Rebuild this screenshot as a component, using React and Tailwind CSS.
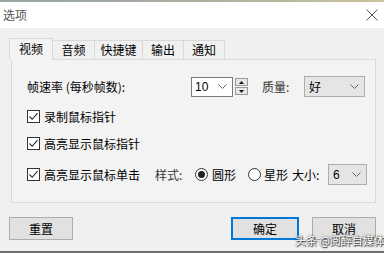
import React from "react";

const cjk = "font-['Noto_Sans_CJK_SC',sans-serif]";

function Chevron() {
  return (
    <svg width="9" height="5" viewBox="0 0 9 5" className="block">
      <path d="M0.5 0.5 L4.5 4.5 L8.5 0.5" fill="none" stroke="#6a6a6a" strokeWidth="1" />
    </svg>
  );
}

function CheckBox() {
  return (
    <div className="w-[13px] h-[13px] border border-[#333] bg-white flex items-center justify-center shrink-0">
      <svg width="11" height="11" viewBox="0 0 11 11">
        <path d="M1.5 5.5 L4.2 8.3 L9.5 2.2" fill="none" stroke="#222" strokeWidth="1.1" />
      </svg>
    </div>
  );
}

function Radio({ checked }) {
  return (
    <div className="w-[13px] h-[13px] rounded-full border border-[#333] bg-white flex items-center justify-center shrink-0">
      {checked && <div className="w-[7px] h-[7px] rounded-full bg-[#222]" />}
    </div>
  );
}

function Tab({ label, selected, w }) {
  if (selected) {
    return (
      <div
        className={`h-[22px] ${w} border border-b-0 border-[#d9d9d9] bg-[#f3f3f3] flex items-center justify-center text-[12px] text-black relative z-10 -mb-px`}
      >
        <span className="pb-[2px]">{label}</span>
      </div>
    );
  }
  return (
    <div
      className={`h-[19px] ${w} border border-b-0 border-l-0 border-[#d9d9d9] bg-[#f0f0f0] flex items-center justify-center text-[12px] text-black`}
    >
      {label}
    </div>
  );
}

export default function App() {
  return (
    <div className={`w-[384px] h-[253px] bg-[#f0f0f0] flex flex-col relative overflow-hidden ${cjk} leading-none`}>
      <div className="h-[2px] bg-gradient-to-r from-[#97a3a6] via-[#a9aea0] to-[#c9c49a]" />
      <div className="h-[26px] bg-white flex items-center justify-between pl-[3px] pr-[5px]">
        <span className="text-[12px] text-[#555]">选项</span>
        <svg width="12" height="12" viewBox="0 0 12 12" className="mr-[1px]">
          <path d="M0.5 0.5 L11.5 11.5 M11.5 0.5 L0.5 11.5" stroke="#555" strokeWidth="1" />
        </svg>
      </div>
      <div className="flex-1 flex flex-col px-[9px]">
        <div className="flex items-end mt-[10px]">
          <Tab label="视频" selected w="w-[44px]" />
          <Tab label="音频" w="w-[42px]" />
          <Tab label="快捷键" w="w-[48px]" />
          <Tab label="输出" w="w-[41px]" />
          <Tab label="通知" w="w-[41px]" />
        </div>
        <div className="ml-[2px] w-[365px] h-[144px] border border-[#d9d9d9] bg-[#f3f3f3] flex flex-col pl-[15px] pt-[16px] text-[12px] text-black">
          <div className="flex items-center h-[21px]">
            <span className="w-[164px]">帧速率 (每秒帧数):</span>
            <div className="w-[42px] h-[20px] border border-[#7a7a7a] bg-white flex items-center justify-between pl-[3px] pr-[5px]">
              <span className="font-['Liberation_Sans',sans-serif] text-[12px]">10</span>
              <Chevron />
            </div>
            <div className="ml-[2px] flex flex-col gap-[1px]">
              <div className="w-[13px] h-[8px] border border-[#9a9a9a] bg-[#e6e6e6] flex items-center justify-center">
                <svg width="5" height="3" viewBox="0 0 5 3"><path d="M0 3 L2.5 0 L5 3 Z" fill="#111" /></svg>
              </div>
              <div className="w-[13px] h-[8px] border border-[#9a9a9a] bg-[#e6e6e6] flex items-center justify-center">
                <svg width="5" height="3" viewBox="0 0 5 3"><path d="M0 0 L2.5 3 L5 0 Z" fill="#111" /></svg>
              </div>
            </div>
            <span className="ml-[14px] w-[42px] text-[#333]">质量:</span>
            <div className="w-[61px] h-[21px] border border-[#adadad] bg-[#e5e5e5] flex items-center justify-between pl-[4px] pr-[5px]">
              <span>好</span>
              <Chevron />
            </div>
          </div>
          <div className="flex items-center h-[13px] mt-[13px]">
            <CheckBox />
            <span className="ml-[4px]">录制鼠标指针</span>
          </div>
          <div className="flex items-center h-[13px] mt-[14px]">
            <CheckBox />
            <span className="ml-[4px]">高亮显示鼠标指针</span>
          </div>
          <div className="flex items-center h-[21px] mt-[14px]">
            <CheckBox />
            <span className="ml-[4px] w-[111px]">高亮显示鼠标单击</span>
            <span className="w-[40px] text-[#333]">样式:</span>
            <Radio checked />
            <span className="ml-[4px] w-[36px]">圆形</span>
            <Radio />
            <span className="ml-[3px] w-[28px]">星形</span>
            <span className="w-[36px]">大小:</span>
            <div className="w-[39px] h-[21px] border border-[#adadad] bg-[#e5e5e5] flex items-center justify-between pl-[4px] pr-[5px]">
              <span className="font-['Liberation_Sans',sans-serif]">6</span>
              <Chevron />
            </div>
          </div>
        </div>
        <div className="flex items-center mt-[14px] text-[12px] text-black">
          <div className="w-[64px] h-[23px] border border-[#adadad] bg-[#e1e1e1] flex items-center justify-center">重置</div>
          <div className="ml-auto w-[68px] h-[23px] border-2 border-[#0078d7] bg-[#e1e1e1] flex items-center justify-center">确定</div>
          <div className="ml-[13px] mr-[-1px] w-[64px] h-[23px] border border-[#adadad] bg-[#e1e1e1] flex items-center justify-center">取消</div>
        </div>
      </div>
      <div className="h-[2px] bg-[#6e6e6e]" />
      <div className="absolute left-[295px] top-[235px] whitespace-nowrap text-[11px] leading-none text-white [text-shadow:0_0_2px_#333,1px_1px_1px_#333]">
        头条 @阅醉自媒体
      </div>
    </div>
  );
}
